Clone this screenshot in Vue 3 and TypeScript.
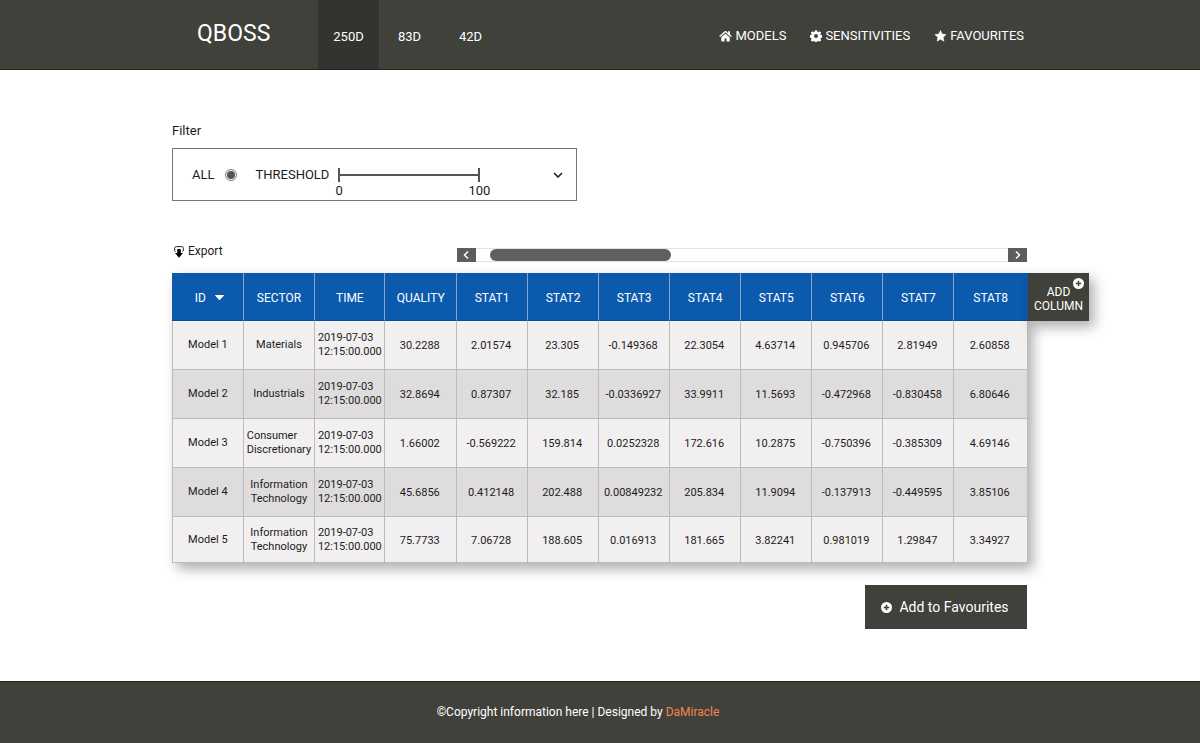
<script setup lang="ts">
import { ref } from 'vue'

interface Row {
  id: string
  sector: string[]
  left?: boolean
  values: string[]
}

const tabs: string[] = ['250D', '83D', '42D']
const activeTab = ref('250D')
const showAll = ref('all')
const threshold = ref(0)

const stats: string[] = ['STAT1', 'STAT2', 'STAT3', 'STAT4', 'STAT5', 'STAT6', 'STAT7', 'STAT8']
const time: string[] = ['2019-07-03', '12:15:00.000']

const rows: Row[] = [
  { id: 'Model 1', sector: ['Materials'], values: ['30.2288', '2.01574', '23.305', '-0.149368', '22.3054', '4.63714', '0.945706', '2.81949', '2.60858'] },
  { id: 'Model 2', sector: ['Industrials'], values: ['32.8694', '0.87307', '32.185', '-0.0336927', '33.9911', '11.5693', '-0.472968', '-0.830458', '6.80646'] },
  { id: 'Model 3', sector: ['Consumer', 'Discretionary'], left: true, values: ['1.66002', '-0.569222', '159.814', '0.0252328', '172.616', '10.2875', '-0.750396', '-0.385309', '4.69146'] },
  { id: 'Model 4', sector: ['Information', 'Technology'], values: ['45.6856', '0.412148', '202.488', '0.00849232', '205.834', '11.9094', '-0.137913', '-0.449595', '3.85106'] },
  { id: 'Model 5', sector: ['Information', 'Technology'], values: ['75.7733', '7.06728', '188.605', '0.016913', '181.665', '3.82241', '0.981019', '1.29847', '3.34927'] },
]
</script>

<template>
  <div class="page">
    <header class="top">
      <div class="wrap top-inner">
        <a class="logo" href="#">QBOSS</a>
        <nav class="tabs" aria-label="Period">
          <a
            v-for="tab in tabs"
            :key="tab"
            href="#"
            class="tab"
            :class="{ active: tab === activeTab }"
            @click.prevent="activeTab = tab"
          >{{ tab }}</a>
        </nav>
        <nav class="links" aria-label="Main">
          <a href="#">
            <svg width="13" height="12" viewBox="0 0 26 24" aria-hidden="true">
              <path fill="currentColor" d="M13 7.500 4.500 14.500V21.500c0 .8.5 1.300 1.300 1.300H11v-6h4v6h5.200c.8 0 1.300-.5 1.300-1.300v-7z" />
              <path fill="currentColor" d="M25.600 12 22 9V2.500h-3.800v3.300L14.600 2.700c-1-.8-2.200-.8-3.200 0L.4 12l1.600 1.800L13 4.800l11 9z" />
            </svg>
            <span>MODELS</span>
          </a>
          <a href="#">
            <svg width="12" height="12" viewBox="0 0 24 24" aria-hidden="true">
              <path fill="currentColor" fill-rule="evenodd" d="M9.800.5h4.400l.7 3.100 1.800.8 2.800-1.700 2.900 2.900-1.700 2.800.8 1.800 2.900.6v4.400l-2.900.7-.8 1.800 1.700 2.800-2.900 2.900-2.800-1.700-1.800.8-.7 3h-4.400l-.7-3-1.800-.8-2.800 1.700-2.900-2.900 1.700-2.800-.8-1.800-3-.7v-4.400l3-.6.8-1.800-1.700-2.800 2.900-2.900 2.800 1.700 1.800-.8zM12 8a4 4 0 1 0 0 8 4 4 0 0 0 0-8z" />
            </svg>
            <span>SENSITIVITIES</span>
          </a>
          <a href="#">
            <svg width="13" height="12" viewBox="0 0 24 24" aria-hidden="true">
              <path fill="currentColor" stroke="currentColor" stroke-linejoin="round" d="m12 1 3.300 7.200 7.900.9-5.800 5.400 1.500 7.900L12 18.500l-6.900 3.900 1.500-7.900L.8 9.100l7.900-.9z" />
            </svg>
            <span>FAVOURITES</span>
          </a>
        </nav>
      </div>
    </header>

    <main class="wrap main">
      <h2 class="filter-title">Filter</h2>
      <section class="filter" aria-label="Filter">
        <label class="all">ALL <input v-model="showAll" type="radio" name="scope" value="all" /></label>
        <label class="threshold-label" for="threshold">THRESHOLD</label>
        <div class="slider">
          <input id="threshold" v-model.number="threshold" type="range" min="0" max="100" />
          <div class="scale"><span>0</span><span>100</span></div>
        </div>
        <button class="expand" type="button" aria-label="Expand filter">
          <svg width="10" height="6" viewBox="0 0 10 6" aria-hidden="true">
            <path d="m1 1 4 4 4-4" fill="none" stroke="currentColor" stroke-width="1.500" />
          </svg>
        </button>
      </section>

      <div class="tools">
        <button class="export" type="button">
          <svg width="10" height="12" viewBox="0 0 10 12" aria-hidden="true">
            <path d="M1.600 5.600C.9 5.400.6 4.900.6 4.200V2.600C.6 1.200 1.200.6 2.400.6h5.200c1.200 0 1.800.6 1.800 2v1.600c0 .7-.3 1.200-1 1.400" fill="none" stroke="currentColor" stroke-width="1" />
            <path d="M3.200 3.400Q3.200 3 3.600 3h2.800q.4 0 .4.4V7H9L5 11.700 1 7h2.200z" fill="#000" />
          </svg>
          <span>Export</span>
        </button>
        <div class="scroller">
          <button type="button" aria-label="Scroll left">
            <svg width="6" height="8" viewBox="0 0 6 8" aria-hidden="true"><path d="M5 .5 1.500 4 5 7.500" /></svg>
          </button>
          <div class="rail"><div class="thumb"></div></div>
          <button type="button" aria-label="Scroll right">
            <svg width="6" height="8" viewBox="0 0 6 8" aria-hidden="true"><path d="M1 .5 4.500 4 1 7.500" /></svg>
          </button>
        </div>
      </div>

      <div class="grid">
        <table>
          <thead>
            <tr>
              <th scope="col"><button class="sort" type="button">ID
                <svg width="9" height="5" viewBox="0 0 9 5" aria-hidden="true"><path d="M0 .5Q0 0 .5 0h8Q9 0 9 .5L5 4.700q-.5.500-1 0z" fill="currentColor" /></svg>
              </button></th>
              <th scope="col">SECTOR</th>
              <th scope="col" class="time">TIME</th>
              <th scope="col">QUALITY</th>
              <th v-for="s in stats" :key="s" scope="col" class="stat">{{ s }}</th>
            </tr>
          </thead>
          <tbody>
            <tr v-for="row in rows" :key="row.id">
              <td>{{ row.id }}</td>
              <td><div class="lines" :class="{ left: row.left }"><div v-for="l in row.sector" :key="l">{{ l }}</div></div></td>
              <td><div class="lines left"><div v-for="l in time" :key="l">{{ l }}</div></div></td>
              <td v-for="(v, i) in row.values" :key="i" class="value">{{ v }}</td>
            </tr>
          </tbody>
        </table>
        <button class="add-column" type="button">
          <span>ADD<br />COLUMN</span>
          <svg class="badge" width="11" height="11" viewBox="0 0 12 12" aria-hidden="true">
            <circle cx="6" cy="6" r="6" fill="#fff" />
            <path d="M6 3v6M3 6h6" stroke="#40413b" stroke-width="1.600" />
          </svg>
        </button>
      </div>

      <button class="favourite" type="button">
        <svg width="11" height="11" viewBox="0 0 12 12" aria-hidden="true">
          <circle cx="6" cy="6" r="6" fill="#fff" />
          <path d="M6 3v6M3 6h6" stroke="#40413b" stroke-width="1.800" />
        </svg>
        <span>Add to Favourites</span>
      </button>
    </main>

    <footer class="bottom">
      <p>©Copyright information here | Designed by <a href="#">DaMiracle</a></p>
    </footer>
  </div>
</template>

<style>
body {
  margin: 0;
  background: #fff;
}
</style>

<style scoped>
.page,
.page * {
  box-sizing: border-box;
}
.page {
  display: flex;
  flex-direction: column;
  min-height: 100vh;
  font-family: Roboto, "Liberation Sans", sans-serif;
  font-size: 13px;
  color: #1c1c1c;
}
button {
  margin: 0;
  padding: 0;
  border: 0;
  background: none;
  color: inherit;
  font: inherit;
  cursor: pointer;
}
a {
  color: inherit;
  text-decoration: none;
}
svg {
  display: block;
  flex: none;
}
.wrap {
  width: 100%;
  max-width: 856px;
  margin: 0 auto;
}
.top {
  background: #40413b;
  border-bottom: 1px solid #24251f;
  color: #fff;
}
.top-inner {
  display: flex;
  align-items: stretch;
  min-height: 69px;
  padding: 0 4px 0 25px;
}
.logo {
  width: 121px;
  padding-top: 20px;
  font-size: 23px;
  line-height: 28px;
}
.tabs {
  display: flex;
}
.tab {
  display: flex;
  align-items: center;
  justify-content: center;
  width: 61px;
  padding-top: 3px;
}
.tab.active {
  background: #33342f;
}
.links {
  display: flex;
  align-items: center;
  gap: 24px;
  margin-left: auto;
  padding-top: 2px;
}
.links a {
  display: flex;
  align-items: center;
  gap: 3px;
}
.main {
  display: flex;
  flex-direction: column;
  flex: 1;
  padding: 52px 0;
}
.filter-title {
  margin: 0 0 8px;
  font-size: 13px;
  font-weight: 400;
  line-height: 18px;
}
.filter {
  display: flex;
  width: 405px;
  max-width: 100%;
  height: 53px;
  padding: 18px 13px 0 19px;
  border: 1px solid #777;
  line-height: 16px;
}
.all {
  display: flex;
  align-items: center;
  gap: 11px;
  height: 16px;
}
.all input {
  width: 12px;
  height: 12px;
  margin: 0;
  appearance: none;
  border: 1px solid #777;
  border-radius: 50%;
}
.all input:checked {
  background: #555;
  background-clip: content-box;
  padding: 1px;
}
.threshold-label {
  margin-left: 18px;
}
.slider {
  width: 152px;
  margin-left: 4px;
}
.slider input {
  display: block;
  width: 142px;
  height: 14px;
  margin: 1px 5px;
  appearance: none;
  background:
    linear-gradient(#555, #555) left / 2px 14px no-repeat,
    linear-gradient(#555, #555) right / 2px 14px no-repeat,
    linear-gradient(#555, #555) center / 100% 2px no-repeat;
}
.slider input::-webkit-slider-thumb {
  width: 2px;
  height: 14px;
  appearance: none;
  background: #555;
}
.scale {
  display: flex;
  justify-content: space-between;
  padding-left: 2px;
  margin-right: -5px;
}
.expand {
  display: grid;
  place-items: center;
  width: 10px;
  height: 16px;
  margin-left: auto;
}
.tools {
  display: flex;
  align-items: flex-start;
  margin-top: 41px;
  min-height: 31px;
}
.export {
  display: flex;
  align-items: center;
  gap: 4px;
  padding-left: 2px;
  font-size: 12px;
  line-height: 18px;
}
.export svg {
  margin-top: 2px;
}
.scroller {
  display: flex;
  width: 66.6%;
  height: 14px;
  margin: 6px 1px 0 auto;
}
.scroller button {
  display: grid;
  place-items: center;
  width: 19px;
  background: #5e5e5e;
}
.scroller path {
  fill: none;
  stroke: #fff;
  stroke-width: 1.5;
}
.rail {
  flex: 1;
  border: 1px solid #e2e2e2;
  border-width: 1px 0;
}
.thumb {
  width: 34%;
  height: 12px;
  margin-left: 14px;
  border-radius: 6px;
  background: #606060;
}
.grid {
  display: flex;
  align-items: flex-start;
  margin-right: -61px;
}
table {
  flex: 1;
  width: 0;
  table-layout: fixed;
  border-collapse: separate;
  border-spacing: 0;
  box-shadow: 5px 6px 12px rgba(0, 0, 0, 0.32);
}
th {
  height: 48px;
  padding: 2px 0 0;
  border-right: 1px solid #8aa5c8;
  border-bottom: 1px solid #0a4c98;
  background: #0b5aae;
  color: #fff;
  font-size: 12px;
  font-weight: 400;
}
th.time {
  width: 8.2%;
}
th.stat {
  width: 8.3%;
}
th.stat:last-child {
  width: 8.6%;
  border-right-color: #0b5aae;
}
td {
  height: 49px;
  padding: 0;
  border-right: 1px solid #bbb;
  border-bottom: 1px solid #bbb;
  background: #f1eff0;
  font-size: 11px;
  line-height: 14px;
  text-align: center;
}
td.value {
  padding: 2px 2px 0 0;
}
td:first-child {
  border-left: 1px solid #bbb;
}
tbody tr:nth-child(even) td {
  background: #dedcdd;
}
tbody tr:last-child td {
  height: 46px;
}
.sort {
  display: inline-flex;
  align-items: center;
  gap: 9px;
  padding-left: 4px;
}
.lines {
  display: inline-block;
  vertical-align: middle;
}
.lines.left {
  text-align: left;
}
.add-column {
  position: relative;
  width: 61px;
  height: 48px;
  padding-top: 3px;
  background: #40413b;
  color: #fff;
  font-size: 12px;
  line-height: 14px;
  box-shadow: 5px 6px 12px rgba(0, 0, 0, 0.32);
}
.add-column span {
  display: block;
}
.badge {
  position: absolute;
  top: 5px;
  right: 5px;
}
.favourite {
  display: flex;
  align-items: center;
  justify-content: center;
  gap: 7px;
  align-self: flex-end;
  width: 162px;
  height: 44px;
  padding-right: 2px;
  margin: 22px 1px 0 0;
  background: #40413b;
  color: #fff;
  font-size: 14px;
}
.bottom {
  display: grid;
  place-items: center;
  min-height: 62px;
  padding: 0 44px 2px 0;
  border-top: 1px solid #24251f;
  background: #40413b;
  color: #fff;
  font-size: 12px;
}
.bottom p {
  margin: 0;
}
.bottom a {
  color: #f58453;
}
</style>
